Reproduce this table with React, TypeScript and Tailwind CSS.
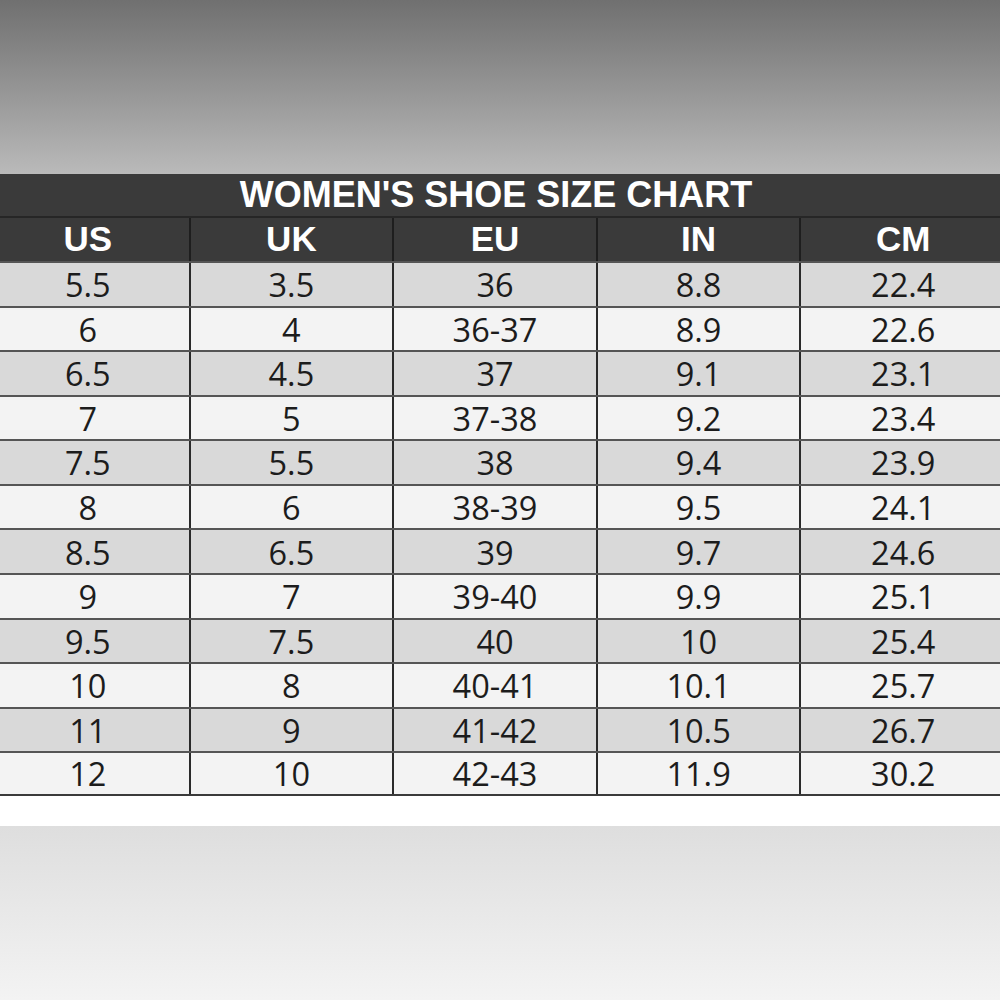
import React from "react";

const rows = [
  ["5.5", "3.5", "36", "8.8", "22.4"],
  ["6", "4", "36-37", "8.9", "22.6"],
  ["6.5", "4.5", "37", "9.1", "23.1"],
  ["7", "5", "37-38", "9.2", "23.4"],
  ["7.5", "5.5", "38", "9.4", "23.9"],
  ["8", "6", "38-39", "9.5", "24.1"],
  ["8.5", "6.5", "39", "9.7", "24.6"],
  ["9", "7", "39-40", "9.9", "25.1"],
  ["9.5", "7.5", "40", "10", "25.4"],
  ["10", "8", "40-41", "10.1", "25.7"],
  ["11", "9", "41-42", "10.5", "26.7"],
  ["12", "10", "42-43", "11.9", "30.2"],
];

const headers = ["US", "UK", "EU", "IN", "CM"];

const App = () => {
  return (
    <div className="flex h-[1000px] w-[1000px] flex-col overflow-hidden bg-white">
      {/* Top backdrop */}
      <div className="h-[174px] shrink-0 bg-gradient-to-b from-[#707070] to-[#bababa]" />

      {/* Chart */}
      <div className="shrink-0 overflow-hidden">
        <div className="-ml-[13px] w-[1018px]">
          <div className="flex h-[42px] items-center justify-center bg-[#3a3a3a] font-['Liberation_Sans',Arial,sans-serif] text-[36px] leading-none font-bold text-white">
            WOMEN'S SHOE SIZE CHART
          </div>
          <div className="grid h-[45px] grid-cols-5 border-t-2 border-[#262626] bg-[#3a3a3a] font-['Liberation_Sans',Arial,sans-serif] text-[35px] leading-none font-bold text-white">
            {headers.map((h, i) => (
              <div
                key={h}
                className={`flex items-center justify-center pb-[3px] ${i < 4 ? "border-r-2 border-[#1e1e1e]" : ""}`}
              >
                {h}
              </div>
            ))}
          </div>
          {rows.map((row, r) => (
            <div
              key={r}
              className={`grid h-[44.58px] grid-cols-5 border-t-2 border-[#555] font-['Open_Sans',sans-serif] text-[32.5px] text-[#1c1c1c] ${
                r % 2 === 0 ? "bg-[#d9d9d9]" : "bg-[#f3f3f3]"
              } ${r === rows.length - 1 ? "border-b-2 border-b-[#3a3a3a]" : ""}`}
            >
              {row.map((cell, c) => (
                <div
                  key={c}
                  className={`flex items-center justify-center pt-[2px] leading-none ${c < 4 ? "border-r-2 border-[#2a2a2a]" : ""}`}
                >
                  {cell}
                </div>
              ))}
            </div>
          ))}
        </div>
      </div>

      {/* Bottom backdrop */}
      <div className="h-[30px] shrink-0 bg-white" />
      <div className="flex-1 bg-gradient-to-b from-[#dedede] to-[#f3f3f3]" />
    </div>
  );
};

export default App;
